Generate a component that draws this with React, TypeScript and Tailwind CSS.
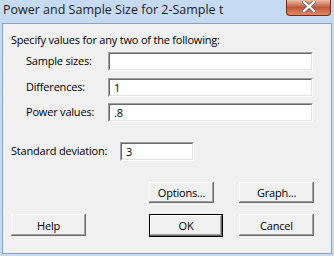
import React from 'react';

const font = "font-['Segoe_UI','Open_Sans',sans-serif]";

function Field({ value, className }: { value: string; className: string }) {
  return (
    <div className={`shrink-0 border-t border-l border-t-[#a0a0a0] border-l-[#a0a0a0] border-b border-r border-b-white border-r-white ${className}`}>
      <div className="h-full border-t border-l border-t-[#696969] border-l-[#696969] border-b border-r border-b-[#e3e3e3] border-r-[#e3e3e3] bg-white px-[4px] flex items-center text-[11px] text-black leading-none">
        {value}
      </div>
    </div>
  );
}

function Btn({ label, className, primary }: { label: string; className: string; primary?: boolean }) {
  const face = (
    <div className="h-full flex items-center justify-center bg-[#f0f0f0] text-[11px] leading-none text-black shadow-[inset_-1px_-1px_#696969,inset_1px_1px_#ffffff,inset_-2px_-2px_#a0a0a0,inset_2px_2px_#f0f0f0]">
      {label}
    </div>
  );
  if (primary) {
    return <div className={`shrink-0 border border-black ${className}`}>{face}</div>;
  }
  return <div className={`shrink-0 ${className}`}>{face}</div>;
}

function Row({ label, value, top }: { label: string; value: string; top: string }) {
  return (
    <div className={`flex items-center ${top}`}>
      <span className="w-[105px] shrink-0 pl-[23px] whitespace-nowrap">{label}</span>
      <Field value={value} className="w-[205px] h-[19px]" />
    </div>
  );
}

export default function App() {
  return (
    <div className={`w-[334px] h-[256px] bg-[#c6daf1] flex flex-col ${font} text-black overflow-hidden`}>
      <div className="h-[23px] shrink-0 flex items-start justify-between pl-[3px] pr-[3px]">
        <span className="text-[12.5px] leading-none mt-[4px] text-[#1e1e1e] whitespace-nowrap">Power and Sample Size for 2-Sample t</span>
        <div className="w-[45px] h-[16px] rounded-b-[4px] border border-t-0 border-[#6b2a1c] bg-linear-to-b from-[#ecbda6] via-[#c0573c] to-[#dc8a62] flex items-start justify-center">
          <svg width="14" height="11" viewBox="0 0 14 11" className="mt-[1px]">
            <path d="M2 1 L12 10 M12 1 L2 10" stroke="#6a6a6a" strokeWidth="4" strokeLinecap="square" />
            <path d="M2 1 L12 10 M12 1 L2 10" stroke="#ffffff" strokeWidth="2.2" strokeLinecap="square" />
          </svg>
        </div>
      </div>
      <div className="mx-[2px] h-[231px] shrink-0 border border-[#8aa2bf] bg-[#f0f0f0] text-[11px] tracking-[-0.2px]">
        <div className="pl-[8px] pt-[8px] leading-[16px] whitespace-nowrap">Specify values for any two of the following:</div>
        <Row label="Sample sizes:" value="" top="mt-[4px]" />
        <Row label="Differences:" value="1" top="mt-[7px]" />
        <Row label="Power values:" value=".8" top="mt-[6px]" />
        <div className="flex items-center mt-[20px]">
          <span className="w-[117px] shrink-0 pl-[8px] whitespace-nowrap">Standard deviation:</span>
          <Field value="3" className="w-[74px] h-[19px]" />
        </div>
        <div className="flex mt-[21px] pl-[146px] gap-[25px]">
          <Btn label="Options..." className="w-[65px] h-[21px]" />
          <Btn label="Graph..." className="w-[75px] h-[21px]" />
        </div>
        <div className="flex items-start mt-[11px] pl-[8px]">
          <Btn label="Help" className="w-[75px] h-[22px]" />
          <Btn label="OK" primary className="ml-[63px] w-[74px] h-[23px]" />
          <Btn label="Cancel" className="ml-[16px] w-[75px] h-[22px]" />
        </div>
      </div>
    </div>
  );
}
